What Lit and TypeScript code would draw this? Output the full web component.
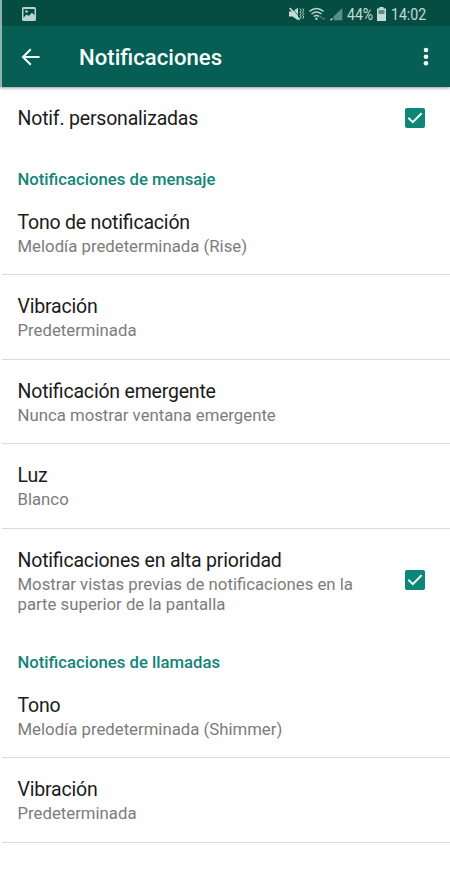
import { LitElement, html, css, svg, nothing } from "lit";
import { customElement, property } from "lit/decorators.js";

@customElement("check-box")
class CheckBox extends LitElement {
  static styles = css`
    :host { display: block; width: 20px; height: 20px; flex: none; margin-bottom: 2px; }
    svg { display: block; }
    .box { fill: #0d8577; }
    .tick { fill: none; stroke: #f2fffc; stroke-width: 2; }
  `;
  render() {
    return html`<svg width="20" height="20" viewBox="0 0 20 20">
      <rect class="box" width="20" height="20" rx="2"></rect>
      <path class="tick" d="M3.3 9.7 L7.8 14.1 L16.6 5.2"></path>
    </svg>`;
  }
}

@customElement("setting-row")
class SettingRow extends LitElement {
  static styles = css`
    :host { display: flex; align-items: center; box-sizing: border-box; margin-left: 2px; padding: 20px 25px 18.5px 15.5px; }
    :host([divided]) { border-bottom: 1px solid #dcdcdc; }
    .text { flex: 1; }
    .title { font-size: 19.5px; letter-spacing: -0.2px; font-feature-settings: "liga" 1; line-height: 24px; color: #1b1b1b; white-space: nowrap; }
    .sub { margin-top: 1px; font-size: 16.75px; line-height: 20px; color: #7c7c7c; max-width: 350px; }
  `;
  @property() heading = "";
  @property() detail = "";
  @property({ type: Boolean }) checked = false;
  @property({ type: Boolean, reflect: true }) divided = false;
  render() {
    return html`<div class="text">
        <div class="title">${this.heading}</div>
        ${this.detail ? html`<div class="sub">${this.detail}</div>` : nothing}
      </div>
      ${this.checked ? html`<check-box></check-box>` : nothing}`;
  }
}

const statusIcons = svg`
  <g fill="#c4dcd7">
    <path d="M0 4.600h3.500L9 .8v12.400L3.500 9.400H0z"/>
    <path d="M2.600 .6L11 10.700" stroke="#054c42" stroke-width=".7"/>
    <path d="M.8 1L10.600 12.800" stroke="#c4dcd7" stroke-width="1.700"/>
    <path d="M11 1.500l1.200 1.700-1.200 1.700 1.200 1.700-1.200 1.700 1.200 1.700-1.200 1.700M13.600 1.500l1.200 1.700-1.200 1.700 1.200 1.700-1.200 1.700 1.200 1.700-1.200 1.700" fill="none" stroke="#b9d3cd" stroke-width="1"/>
  </g>
  <g fill="none" stroke="#b9d3cd" stroke-width="1.400">
    <path d="M20.500 4.400Q27.500 -1.300 34.500 4.400M22.500 7Q27.500 3.100 32.500 7M24.700 9.500Q27.500 7.400 30.300 9.500"/>
  </g>
  <circle cx="27.500" cy="11.800" r="1.200" fill="#b9d3cd"/>
  <path d="M30.500 10.700l1.500-2 1.500 2zM33 11l1.600 2 1.600-2z" fill="#5b8f85"/>
  <path d="M40.500 13.300h2.900v-2.900z" fill="#c4dcd7"/>
  <path d="M44.600 13.300V9.600L53.300 1v12.300z" fill="#5b8f85"/>`;

@customElement("app-root")
class AppRoot extends LitElement {
  static styles = css`
    :host { display: block; width: 450px; height: 870px; overflow: hidden; background: #fefefe; font-family: Roboto, "Noto Sans", sans-serif; }
    .top { border-left: 2px solid #8fb3ad; box-shadow: 0 1px 3px rgba(0, 0, 0, 0.4); }
    .status { display: flex; align-items: center; height: 26px; box-sizing: border-box; padding: 1px 23px 0 20px; background: #054c42; color: #c4dcd7; font-size: 16px; }
    .status svg { display: block; flex: none; }
    .gap { flex: 1; }
    .pct { margin-left: 4px; width: 26px; white-space: nowrap; padding-top: 1px; }
    .pct span, .clock span { display: inline-block; transform-origin: 0 50%; transform: scaleX(0.88); }
    .battery { margin-left: 4px; }
    .clock { margin-left: 5px; width: 36px; white-space: nowrap; padding-top: 1px; }
    .bar { display: flex; align-items: center; height: 61px; background: #075e54; color: #f4fffc; padding: 0 20px 0 19px; }
    .bar svg { display: block; flex: none; }
    h1 { flex: 1; margin: 0 0 0 39px; font-size: 22.15px; line-height: 28px; font-weight: 500; }
    h2 { margin: 0; padding-left: 17.5px; font-size: 16.7px; line-height: 20px; font-weight: 500; color: #128577; }
    .first { padding-top: 19.5px; padding-bottom: 18px; }
    .message { padding-top: 21.1px; }
    .high { padding-bottom: 6px; }
    .after { margin-top: 1px; }
    .calls { padding-top: 33.4px; }
  `;
  render() {
    return html`
      <header class="top">
        <div class="status">
          <svg width="14" height="14" viewBox="0 0 14 14">
            <path fill="#b9d3cd" fill-rule="evenodd" d="M1.500 0h11Q14 0 14 1.500v11Q14 14 12.500 14h-11Q0 14 0 12.500v-11Q0 0 1.500 0zM1.500 2v8.500l3.200-3 2 1.600 3.300-3.300 2.500 2.500V2z"/>
            <circle cx="4.500" cy="4.500" r="1.300" fill="#b9d3cd"/>
          </svg>
          <div class="gap"></div>
          <svg width="54" height="14" viewBox="0 0 54 14">${statusIcons}</svg>
          <div class="pct"><span>44%</span></div>
          <svg class="battery" width="9" height="14" viewBox="0 0 9 14">
            <path d="M2.500 0h4v1.500H9V14H0V1.500h2.500z" fill="#c4dcd7"/>
            <path d="M1.500 3h6v4h-6z" fill="#5b8f85"/>
          </svg>
          <div class="clock"><span>14:02</span></div>
        </div>
        <div class="bar">
          <svg width="19" height="18" viewBox="0 0 19 18">
            <path d="M18.500 9H2M9.800 1.200L2 9l7.800 7.800" fill="none" stroke="#f4fffc" stroke-width="2"/>
          </svg>
          <h1>Notificaciones</h1>
          <svg width="8" height="20" viewBox="0 0 8 20" fill="#f4fffc">
            <circle cx="4" cy="3" r="2.300"/><circle cx="4" cy="9.700" r="2.300"/><circle cx="4" cy="16.300" r="2.300"/>
          </svg>
        </div>
      </header>
      <main>
        <setting-row class="first" heading="Notif. personalizadas" checked></setting-row>
        <h2 class="message">Notificaciones de mensaje</h2>
        <setting-row class="after" heading="Tono de notificación" detail="Melodía predeterminada (Rise)" divided></setting-row>
        <setting-row heading="Vibración" detail="Predeterminada" divided></setting-row>
        <setting-row heading="Notificación emergente" detail="Nunca mostrar ventana emergente" divided></setting-row>
        <setting-row heading="Luz" detail="Blanco" divided></setting-row>
        <setting-row class="high" heading="Notificaciones en alta prioridad" detail="Mostrar vistas previas de notificaciones en la parte superior de la pantalla" checked></setting-row>
        <h2 class="calls">Notificaciones de llamadas</h2>
        <setting-row class="after" heading="Tono" detail="Melodía predeterminada (Shimmer)" divided></setting-row>
        <setting-row heading="Vibración" detail="Predeterminada" divided></setting-row>
      </main>
    `;
  }
}
